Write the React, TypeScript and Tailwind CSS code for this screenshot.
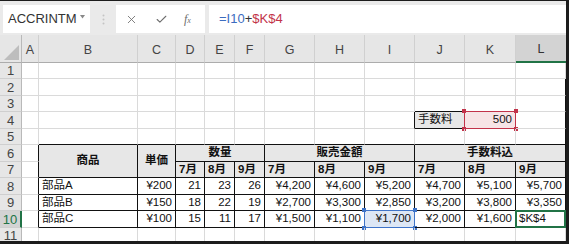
import type { ReactNode } from 'react';
import { Check, X } from 'lucide-react';
import clsx from 'clsx';

// Excel-like sheet snapshot: formula bar, column/row headers, and a small pricing table.

const COLS = ['A', 'B', 'C', 'D', 'E', 'F', 'G', 'H', 'I', 'J', 'K', 'L'];

type CellProps = {
  children?: ReactNode;
  className?: string;
  rb?: boolean; // black right border
  bb?: boolean; // black bottom border
};

function Cell({ children, className, rb, bb }: CellProps) {
  return (
    <div
      className={clsx(
        'relative flex min-w-0 items-center overflow-visible whitespace-nowrap border-r border-b px-[3px] text-[11.5px] leading-none text-[#111]',
        rb ? 'border-r-[#111]' : 'border-r-[#dadada]',
        bb ? 'border-b-[#111]' : 'border-b-[#dadada]',
        className,
      )}
    >
      {children}
    </div>
  );
}

function RowHead({ n, active }: { n: number; active?: boolean }) {
  return (
    <div
      className={clsx(
        'flex items-center justify-center border-b border-b-[#cfcfcf] text-[13px] leading-none',
        active
          ? 'border-r-2 border-r-[#217346] bg-[#d3d3d3] text-[#217346]'
          : 'border-r border-r-[#b9b9b9] bg-[#e6e6e6] text-[#444]',
      )}
    >
      {n}
    </div>
  );
}

function Handles({ color }: { color: string }) {
  return (
    <>
      <span className={clsx('absolute -left-[3px] -top-[3px] h-[4px] w-[4px]', color)} />
      <span className={clsx('absolute -right-[3px] -top-[3px] h-[4px] w-[4px]', color)} />
      <span className={clsx('absolute -bottom-[3px] -left-[3px] h-[4px] w-[4px]', color)} />
      <span className={clsx('absolute -bottom-[3px] -right-[3px] h-[4px] w-[4px]', color)} />
    </>
  );
}

const DATA = [
  { name: '部品A', price: '¥200', qty: ['21', '23', '26'], sales: ['¥4,200', '¥4,600', '¥5,200'], fee: ['¥4,700', '¥5,100', '¥5,700'] },
  { name: '部品B', price: '¥150', qty: ['18', '22', '19'], sales: ['¥2,700', '¥3,300', '¥2,850'], fee: ['¥3,200', '¥3,800', '¥3,350'] },
  { name: '部品C', price: '¥100', qty: ['15', '11', '17'], sales: ['¥1,500', '¥1,100', '¥1,700'], fee: ['¥2,000', '¥1,600', ''] },
];

const MONTHS = ['7月', '8月', '9月'];

export default function App() {
  return (
    <div className="h-[244px] w-[569px] overflow-hidden border-t border-r-[3px] border-b-[3px] border-[#1c1c1c] bg-white font-['Liberation_Sans','Noto_Sans_CJK_JP',sans-serif]">
      {/* formula bar */}
      <div className="flex h-[34px] items-start gap-0 bg-[#eaeaea] pt-[4px] pl-[3px]">
        <div className="flex h-[28px] w-[87px] items-center justify-between bg-white pr-[5px] pl-[5px] text-[13px] text-[#333]">
          <span>ACCRINTM</span>
          <svg width="5" height="4" viewBox="0 0 5 4" className="mb-[4px]">
            <path d="M0 0h5L2.5 3.5z" fill="#888" />
          </svg>
        </div>
        <div className="flex h-[28px] w-[26px] items-center justify-center">
          <svg width="3" height="11" viewBox="0 0 3 11">
            <circle cx="1.5" cy="1.5" r="1" fill="#c4c4c4" />
            <circle cx="1.5" cy="5.5" r="1" fill="#c4c4c4" />
            <circle cx="1.5" cy="9.5" r="1" fill="#c4c4c4" />
          </svg>
        </div>
        <div className="flex h-[28px] w-[89px] items-center bg-white pl-[9px] text-[#6e6e6e]">
          <X className="h-[13px] w-[13px]" strokeWidth={1.6} />
          <Check className="ml-[17px] h-[13px] w-[13px]" strokeWidth={2} />
          <span className="ml-[16px] font-['Liberation_Serif',serif] text-[12px] italic">
            f<span className="text-[8px]">x</span>
          </span>
        </div>
        <div className="ml-[4px] flex h-[28px] flex-1 items-center bg-white pl-[10px] text-[13px]">
          <span className="text-[#3b6cc0]">=I10</span>
          <span className="text-[#333]">+</span>
          <span className="text-[#c2334a]">$K$4</span>
        </div>
      </div>

      {/* sheet */}
      <div className="grid grid-cols-[22px_17px_99px_38px_29px_30px_30px_50px_50px_50px_50px_51px_50px] grid-rows-[28px_16px_17px_16px_17px_16px_17px_16px_17px_16px_17px_16px]">
        {/* column headers */}
        <div className="relative border-r border-b border-r-[#b9b9b9] border-b-[#acacac] bg-[#e6e6e6]">
          <svg width="15" height="15" viewBox="0 0 15 15" className="absolute right-[2px] bottom-[2px]">
            <path d="M15 0V15H0z" fill="#bdbdbd" />
          </svg>
        </div>
        {COLS.map((c) => (
          <div
            key={c}
            className={clsx(
              'flex items-end justify-center pb-[6px] text-[12.5px] leading-none',
              c === 'L'
                ? 'border-b-2 border-b-[#217346] bg-[#d3d3d3] text-[#333]'
                : 'border-r border-b border-r-[#d0d0d0] border-b-[#acacac] bg-[#e6e6e6] text-[#444]',
            )}
          >
            {c}
          </div>
        ))}

        {/* rows 1-5 */}
        {[1, 2, 3, 4, 5].map((r) => (
          <div key={r} className="contents">
            <RowHead n={r} />
            {COLS.map((c) => {
              const topOfTable = r === 5 && c !== 'A';
              const aboveFee = r === 3 && c === 'J';
              const leftOfFee = r === 4 && c === 'I';
              const rightEdge = r >= 2 && c === 'L';
              if (r === 4 && c === 'J') {
                return (
                  <Cell key={c} rb bb className="bg-[#e7e7e7]">
                    手数料
                  </Cell>
                );
              }
              if (r === 4 && c === 'K') {
                return (
                  <Cell key={c} rb bb className="justify-end bg-[#f7e4e6]">
                    500
                    <span className="pointer-events-none absolute -top-px -left-px -right-px -bottom-px border-[1.5px] border-[#c2334a]" />
                    <Handles color="bg-[#c2334a]" />
                  </Cell>
                );
              }
              return <Cell key={c} rb={leftOfFee || rightEdge} bb={topOfTable || aboveFee} />;
            })}
          </div>
        ))}

        {/* row 6 */}
        <RowHead n={6} />
        <Cell rb />
        <Cell rb bb className="row-span-2 justify-center bg-[#e7e7e7] font-bold">
          商品
        </Cell>
        <Cell rb bb className="row-span-2 justify-center bg-[#e7e7e7] font-bold">
          単価
        </Cell>
        <Cell rb bb className="col-span-3 justify-center bg-[#e7e7e7] font-bold">
          数量
        </Cell>
        <Cell rb bb className="col-span-3 justify-center bg-[#e7e7e7] font-bold">
          販売金額
        </Cell>
        <Cell rb bb className="col-span-3 justify-center bg-[#e7e7e7] font-bold">
          手数料込
        </Cell>

        {/* row 7 */}
        <RowHead n={7} />
        <Cell rb />
        {[0, 1, 2].map((g) =>
          MONTHS.map((m) => (
            <Cell key={`${g}-${m}`} rb bb className="bg-[#e7e7e7] font-bold">
              {m}
            </Cell>
          )),
        )}

        {/* rows 8-10 */}
        {DATA.map((d, i) => {
          const r = 8 + i;
          const last = r === 10;
          return (
            <div key={r} className="contents">
              <RowHead n={r} active={last} />
              <Cell rb />
              <Cell rb bb>
                {d.name}
              </Cell>
              <Cell rb bb className="justify-end">
                {d.price}
              </Cell>
              {d.qty.map((q, j) => (
                <Cell key={`q${j}`} rb bb className="justify-end">
                  {q}
                </Cell>
              ))}
              {d.sales.map((s, j) => {
                const sel = last && j === 2;
                return (
                  <Cell key={`s${j}`} rb bb className={clsx('justify-end', sel && 'bg-[#dde7f5]')}>
                    {s}
                    {sel && (
                      <>
                        <span className="pointer-events-none absolute -top-px -left-px -right-px -bottom-px border-[1.5px] border-[#3f74c8]" />
                        <Handles color="bg-[#3f74c8]" />
                      </>
                    )}
                  </Cell>
                );
              })}
              {d.fee.map((f, j) => {
                const editing = last && j === 2;
                return (
                  <Cell key={`f${j}`} rb bb className={editing ? 'justify-start' : 'justify-end'}>
                    {editing ? '$K$4' : f}
                    {editing && (
                      <span className="pointer-events-none absolute -top-px -left-px -right-px -bottom-px border-2 border-[#217346]" />
                    )}
                  </Cell>
                );
              })}
            </div>
          );
        })}

        {/* row 11 */}
        <RowHead n={11} />
        {COLS.map((c) => (
          <Cell key={c} />
        ))}
      </div>
    </div>
  );
}
